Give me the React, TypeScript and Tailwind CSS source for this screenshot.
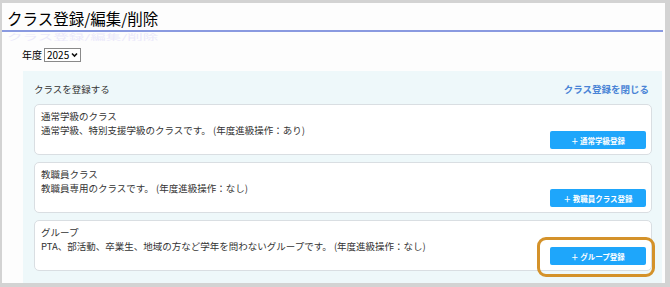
import React from "react";

const font = { fontFamily: '"Noto Sans CJK JP", "Noto Sans", sans-serif' };

function Card({ title, desc, btn, highlight }: { title: string; desc: string; btn: string; highlight?: boolean }) {
  return (
    <div className="relative flex h-[51px] flex-col rounded-[5px] border border-[#d9dee2] bg-white pl-[6px] pr-[4px] pt-[4px]">
      <div className="text-[9.5px] leading-[14px] text-[#333]">{title}</div>
      <div className="text-[9.5px] leading-[14px] text-[#333]">{desc}</div>
      <div className="absolute bottom-[5px] right-[5px] flex h-[18px] w-[96px] items-center justify-center rounded-[2px] bg-[#1ea6fb] text-[7.5px] font-bold text-white">
        ＋ {btn}
      </div>
      {highlight && (
        <div className="pointer-events-none absolute bottom-[-7px] right-[-4px] h-[40px] w-[118px] rounded-[9px] border-[3px] border-[#d4922a]" />
      )}
    </div>
  );
}

export default function App() {
  return (
    <div style={font} className="h-[287px] w-[670px] bg-[#d3d3d3] pl-[2px] pr-[5px] pt-[3px] pb-[4px]">
      <div className="flex h-full flex-col bg-[#fdfdfd]">
        <div className="pl-[5px] pt-[4px] text-[15.5px] leading-[22px] text-black">クラス登録/編集/削除</div>
        <div className="mt-[1px] h-[2px] w-[661px] bg-[#8a9ae0]" />
        <div className="h-[9px] overflow-hidden pl-[5px]">
          <div className="origin-top scale-y-50 text-[15.5px] leading-[18px] text-[#ebe9fb]">クラス登録/編集/削除</div>
        </div>
        <div className="ml-[20px] mt-[6px] flex items-center gap-[2px] text-[10px] text-black">
          <span>年度</span>
          <span className="flex h-[14px] items-center gap-[2px] border border-[#8a8a8a] bg-white px-[2px] text-[10px]">
            2025
            <svg width="7" height="6" viewBox="0 0 7 6">
              <path d="M1 1.5 L3.5 4 L6 1.5" stroke="#111" strokeWidth="1.6" fill="none" />
            </svg>
          </span>
        </div>
        <div className="ml-[21px] mr-[3px] mt-[9px] flex-1 bg-[#eef8fa] pl-[11px] pr-[10px] pt-[11px]">
          <div className="flex items-center justify-between">
            <span className="text-[9.5px] text-[#333]">クラスを登録する</span>
            <span className="pr-[3px] text-[9.5px] font-semibold text-[#4a84d6]">クラス登録を閉じる</span>
          </div>
          <div className="mt-[8px] flex flex-col gap-[7px]">
            <Card title="通常学級のクラス" desc="通常学級、特別支援学級のクラスです。 (年度進級操作：あり)" btn="通常学級登録" />
            <Card title="教職員クラス" desc="教職員専用のクラスです。 (年度進級操作：なし)" btn="教職員クラス登録" />
            <Card title="グループ" desc="PTA、部活動、卒業生、地域の方など学年を問わないグループです。 (年度進級操作：なし)" btn="グループ登録" highlight />
          </div>
        </div>
      </div>
    </div>
  );
}
